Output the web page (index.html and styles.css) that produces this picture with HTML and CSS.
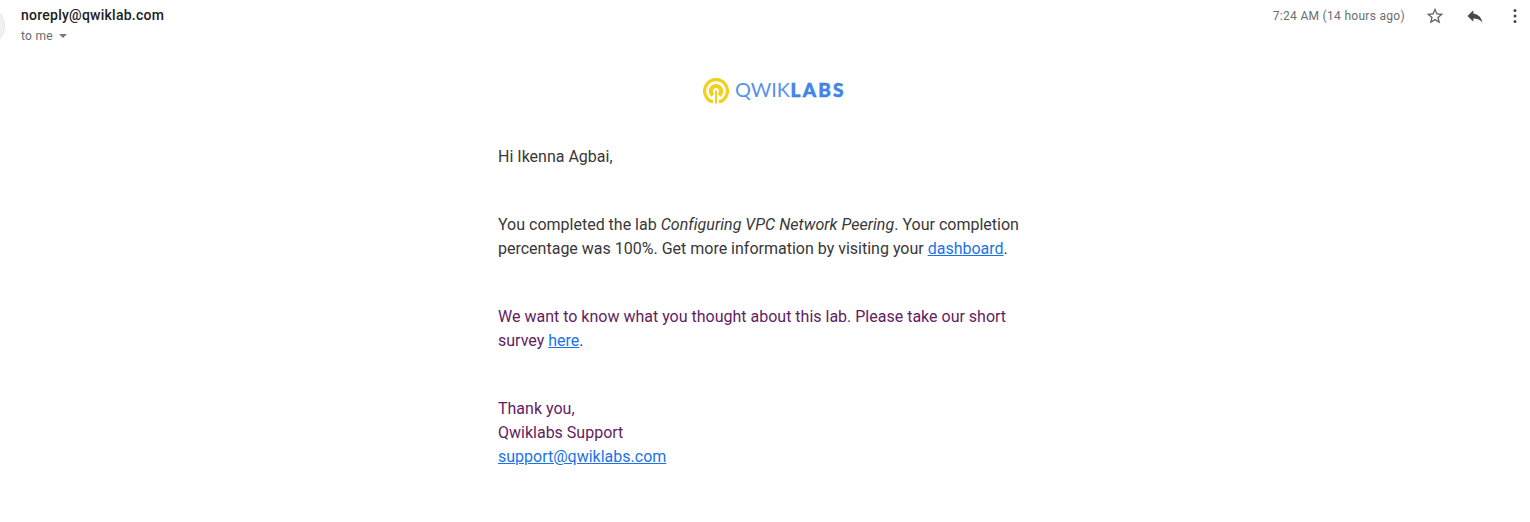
FILE: index.html
```html
<!DOCTYPE html>
<html lang="en">
<head>
<meta charset="utf-8">
<title>Qwiklabs</title>
<link rel="stylesheet" href="styles.css">
</head>
<body>
<header class="header">
  <span class="avatar"></span>
  <div class="sender">
    <div class="from">noreply@qwiklab.com</div>
    <div class="to">to me <span class="caret"></span></div>
  </div>
  <div class="meta">
    <span class="time">7:24 AM (14 hours ago)</span>
    <svg class="icon star" viewBox="0 0 24 24"><path d="M22 9.24l-7.19-.62L12 2 9.19 8.63 2 9.24l5.46 4.73L5.82 21 12 17.27 18.18 21l-1.63-7.03L22 9.24zM12 15.4l-3.76 2.27 1-4.28-3.32-2.88 4.38-.38L12 6.1l1.71 4.04 4.38.38-3.32 2.88 1 4.28L12 15.4z"/></svg>
    <svg class="icon reply" viewBox="0 0 24 24"><path d="M10 9V5l-7 7 7 7v-4.100c5 0 8.500 1.600 11 5.100-1-5-4-10-11-11z"/></svg>
    <svg class="icon more" viewBox="0 0 24 24"><circle cx="12" cy="5.500" r="1.800"/><circle cx="12" cy="12" r="1.800"/><circle cx="12" cy="18.500" r="1.800"/></svg>
  </div>
</header>
<main class="message">
  <div class="logo">
    <svg class="mark" viewBox="0 0 26 26"><g fill="none" stroke="#f4cf1d"><path stroke-width="3.200" d="M10 24A11.400 11.400 0 1 1 16 24"/><path stroke-width="4.200" d="M10 17.200A5.100 5.100 0 1 1 16 17.200"/><path stroke-width="2" d="M13 12.500V25.500"/></g></svg>
    <svg class="word" viewBox="0 0 110 26"><text x="0" y="19.400" textLength="55" lengthAdjust="spacingAndGlyphs" class="thin">QWIK</text><text x="55.500" y="19.400" textLength="53" lengthAdjust="spacing" class="bold">LABS</text></svg>
  </div>
  <p>Hi Ikenna Agbai,</p>
  <p>You completed the lab <em>Configuring VPC Network Peering</em>. Your completion<br>percentage was 100%. Get more information by visiting your <a href="#">dashboard</a>.</p>
  <p class="quoted">We want to know what you thought about this lab. Please take our short<br>survey <a href="#">here</a>.</p>
  <p class="quoted">Thank you,<br>Qwiklabs Support<br><a href="#">support@qwiklabs.com</a></p>
</main>
</body>
</html>
```
FILE: styles.css
```css
body { margin: 0; background: #fff; font-family: Roboto, sans-serif; overflow: hidden; }
.header { display: flex; height: 48px; }
.avatar { box-sizing: border-box; width: 40px; height: 40px; margin: 6px 0 0 -35px; border: 1px solid #e6e6e6; border-radius: 50%; background: #f1f1f1; flex: none; }
.sender { margin-left: 16px; padding-top: 5px; }
.from { font-size: 14px; line-height: 20px; font-weight: 500; letter-spacing: .25px; color: #202124; }
.to { display: flex; align-items: center; margin-top: 1px; font-size: 12px; line-height: 20px; letter-spacing: .3px; color: #666a6e; }
.caret { margin-left: 6px; border: 4px solid transparent; border-top-color: #777; border-bottom: 0; }
.meta { display: flex; align-items: center; height: 32px; margin-left: auto; margin-right: 5px; }
.time { font-size: 12px; letter-spacing: .3px; color: #6a6e73; margin-right: 20px; }
.icon { width: 20px; height: 20px; fill: #484848; }
.star { fill: #666; }
.star, .reply { margin-right: 20px; }
.message { width: 534px; margin: 30px auto 0; color: #383838; font-size: 16px; line-height: 24px; white-space: nowrap; }
.logo { display: flex; gap: 6px; height: 26px; margin-bottom: 41px; padding-left: 205px; }
.mark { width: 26px; height: 26px; }
.word { width: 110px; height: 26px; fill: #4285e8; }
.thin { font: 400 20px Lato, sans-serif; fill: #5793ea; }
.bold { font: 900 19px Lato, sans-serif; stroke: #3b82e6; stroke-width: .5px; }
p { margin: 0 0 44px; }
em { letter-spacing: .04px; }
.quoted { color: #621d62; }
a { color: #1a73e8; }
```
